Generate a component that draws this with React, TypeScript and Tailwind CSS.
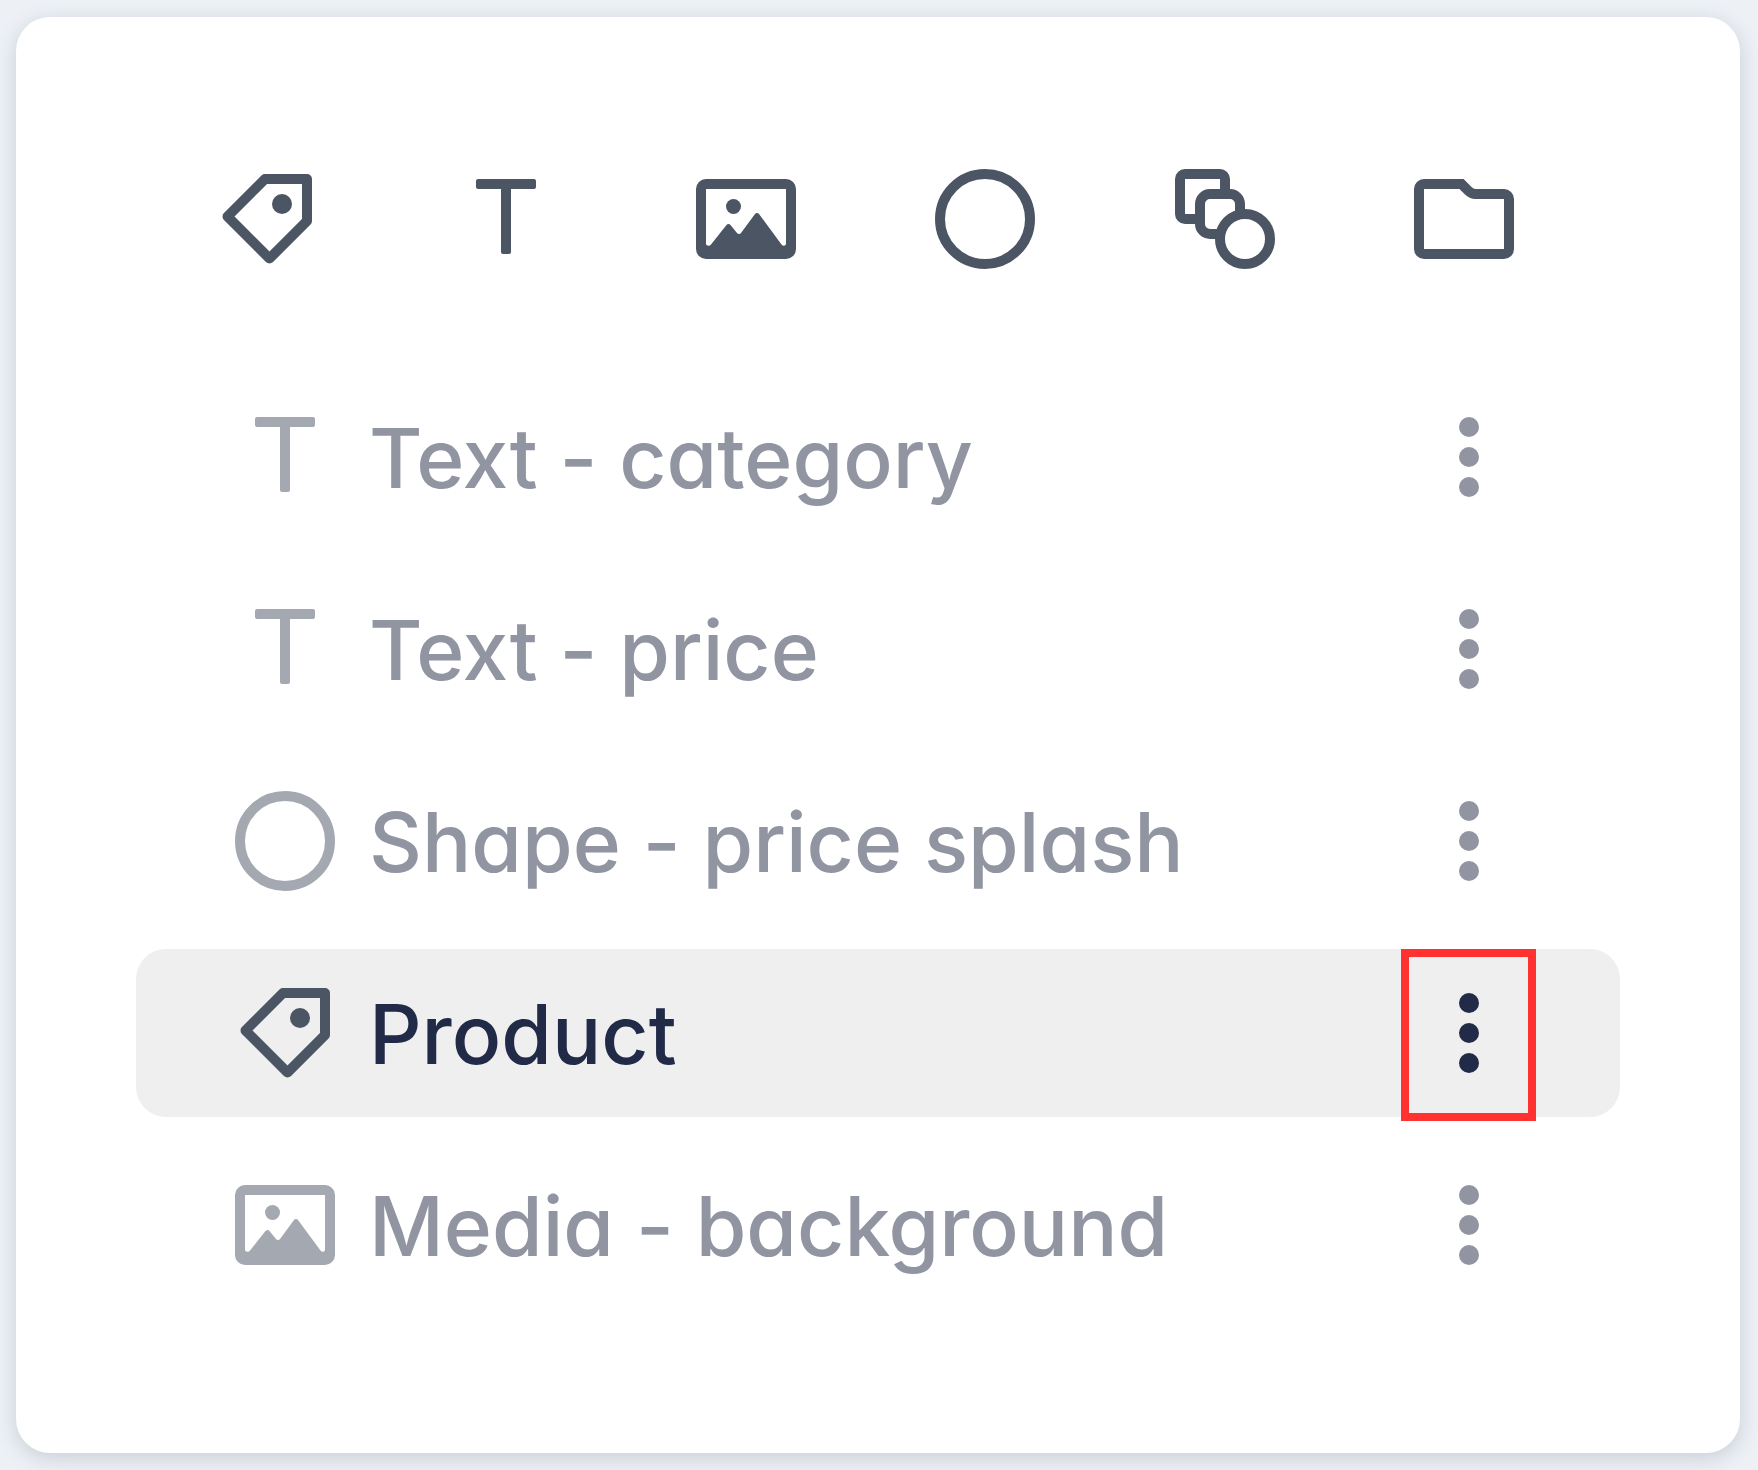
import React from 'react'

type IconProps = { className?: string }

const TagIcon = ({ className }: IconProps) => (
  <svg viewBox="0 0 24 24" className={className} fill="none" aria-hidden="true">
    <path
      d="M11.6 4H20v8.4l-7.5 7.5-8.4-8.4L11.6 4Z"
      stroke="currentColor"
      strokeWidth="2"
      strokeLinejoin="round"
    />
    <circle cx="15" cy="9" r="2" fill="currentColor" />
  </svg>
)

const TextIcon = ({ className }: IconProps) => (
  <svg viewBox="0 0 24 24" className={className} fill="currentColor" aria-hidden="true">
    <path d="M6.4 4h11.2a.4.4 0 0 1 .4.4v1.2a.4.4 0 0 1-.4.4H13v12.6a.4.4 0 0 1-.4.4h-1.2a.4.4 0 0 1-.4-.4V6H6.4a.4.4 0 0 1-.4-.4V4.4a.4.4 0 0 1 .4-.4Z" />
  </svg>
)

const MediaIcon = ({ className }: IconProps) => (
  <svg viewBox="0 0 24 24" className={className} fill="currentColor" aria-hidden="true">
    <path
      fillRule="evenodd"
      d="M4 4h16a2 2 0 0 1 2 2v12a2 2 0 0 1-2 2H4a2 2 0 0 1-2-2V6a2 2 0 0 1 2-2Zm0 2v10.900c0 .5.7.6 1 .2l3.100-3.900a.5.5 0 0 1 .8 0l1.300 1.600a.5.5 0 0 0 .8 0l2.800-3.800a.5.5 0 0 1 .8 0l4.500 6.100c.3.4.9.3.9-.2V6H4Z"
    />
    <circle cx="9.5" cy="9.5" r="1.5" />
  </svg>
)

const CircleIcon = ({ className }: IconProps) => (
  <svg viewBox="0 0 24 24" className={className} fill="none" aria-hidden="true">
    <circle cx="12" cy="12" r="9" stroke="currentColor" strokeWidth="2" />
  </svg>
)

const GroupIcon = ({ className }: IconProps) => (
  <svg viewBox="0 0 24 24" className={className} fill="white" stroke="currentColor" strokeWidth="2" aria-hidden="true">
    <rect x="3" y="3" width="9" height="9" rx="1" />
    <rect x="7" y="7" width="8" height="8" rx="2" />
    <circle cx="16" cy="16" r="5" />
  </svg>
)

const FolderIcon = ({ className }: IconProps) => (
  <svg viewBox="0 0 24 24" className={className} fill="none" aria-hidden="true">
    <path
      d="M4 5h7.5l1.3 1.3c.5.5.9.7 1.5.7H20a1 1 0 0 1 1 1v10a1 1 0 0 1-1 1H4a1 1 0 0 1-1-1V6a1 1 0 0 1 1-1Z"
      stroke="currentColor"
      strokeWidth="2"
    />
  </svg>
)

const MoreIcon = ({ className }: IconProps) => (
  <svg viewBox="0 0 24 24" className={className} fill="currentColor" aria-hidden="true">
    <circle cx="12" cy="6" r="2" />
    <circle cx="12" cy="12" r="2" />
    <circle cx="12" cy="18" r="2" />
  </svg>
)

const tools = [
  { label: 'Add product', Icon: TagIcon },
  { label: 'Add text', Icon: TextIcon },
  { label: 'Add media', Icon: MediaIcon },
  { label: 'Add shape', Icon: CircleIcon },
  { label: 'Add group', Icon: GroupIcon },
  { label: 'Add folder', Icon: FolderIcon },
]

const layers = [
  { name: 'Text - category', Icon: TextIcon },
  { name: 'Text - price', Icon: TextIcon },
  { name: 'Shape - price splash', Icon: CircleIcon },
  { name: 'Product', Icon: TagIcon, selected: true },
  { name: 'Media - background', Icon: MediaIcon },
]

const App = () => {
  return (
    <div className="flex min-h-screen bg-[#edf1f6] py-[17px] pl-4 pr-[18px] font-['Inter',sans-serif]">
      <main className="flex-1 rounded-[34px] bg-white px-[120px] pt-[142px] pb-36 shadow-[0_5px_20px_rgba(75,85,99,0.22)]">
        {/* Toolbar */}
        <div className="flex justify-between pl-[71px] pr-24 text-[#4b5563]">
          {tools.map(({ label, Icon }) => (
            <button key={label} type="button" aria-label={label}>
              <Icon className="size-[120px]" />
            </button>
          ))}
        </div>

        {/* Layers */}
        <ul className="mt-[94px] flex flex-col gap-6">
          {layers.map(({ name, Icon, selected }) => (
            <li
              key={name}
              className={`flex h-[168px] items-center rounded-[30px] pl-[89px] pr-[84px] ${
                selected ? 'bg-[#efefef] text-[#212b48]' : 'text-[#9195a2]'
              }`}
            >
              <Icon className={`size-[120px] shrink-0 ${selected ? 'text-[#4b5563]' : 'text-[#a4a9b1]'}`} />
              <span className="ml-6 flex-1 whitespace-nowrap pt-1 text-[82px] leading-[100px] font-medium [font-feature-settings:'cv11']">
                {name}
              </span>
              <button
                type="button"
                aria-label={`${name} options`}
                className="relative flex h-full w-[135px] items-center justify-center"
              >
                <MoreIcon className="size-[120px]" />
                {selected && <span className="absolute inset-x-0 top-0 -bottom-1 border-8 border-[#ff3131]" />}
              </button>
            </li>
          ))}
        </ul>
      </main>
    </div>
  )
}

export default App
